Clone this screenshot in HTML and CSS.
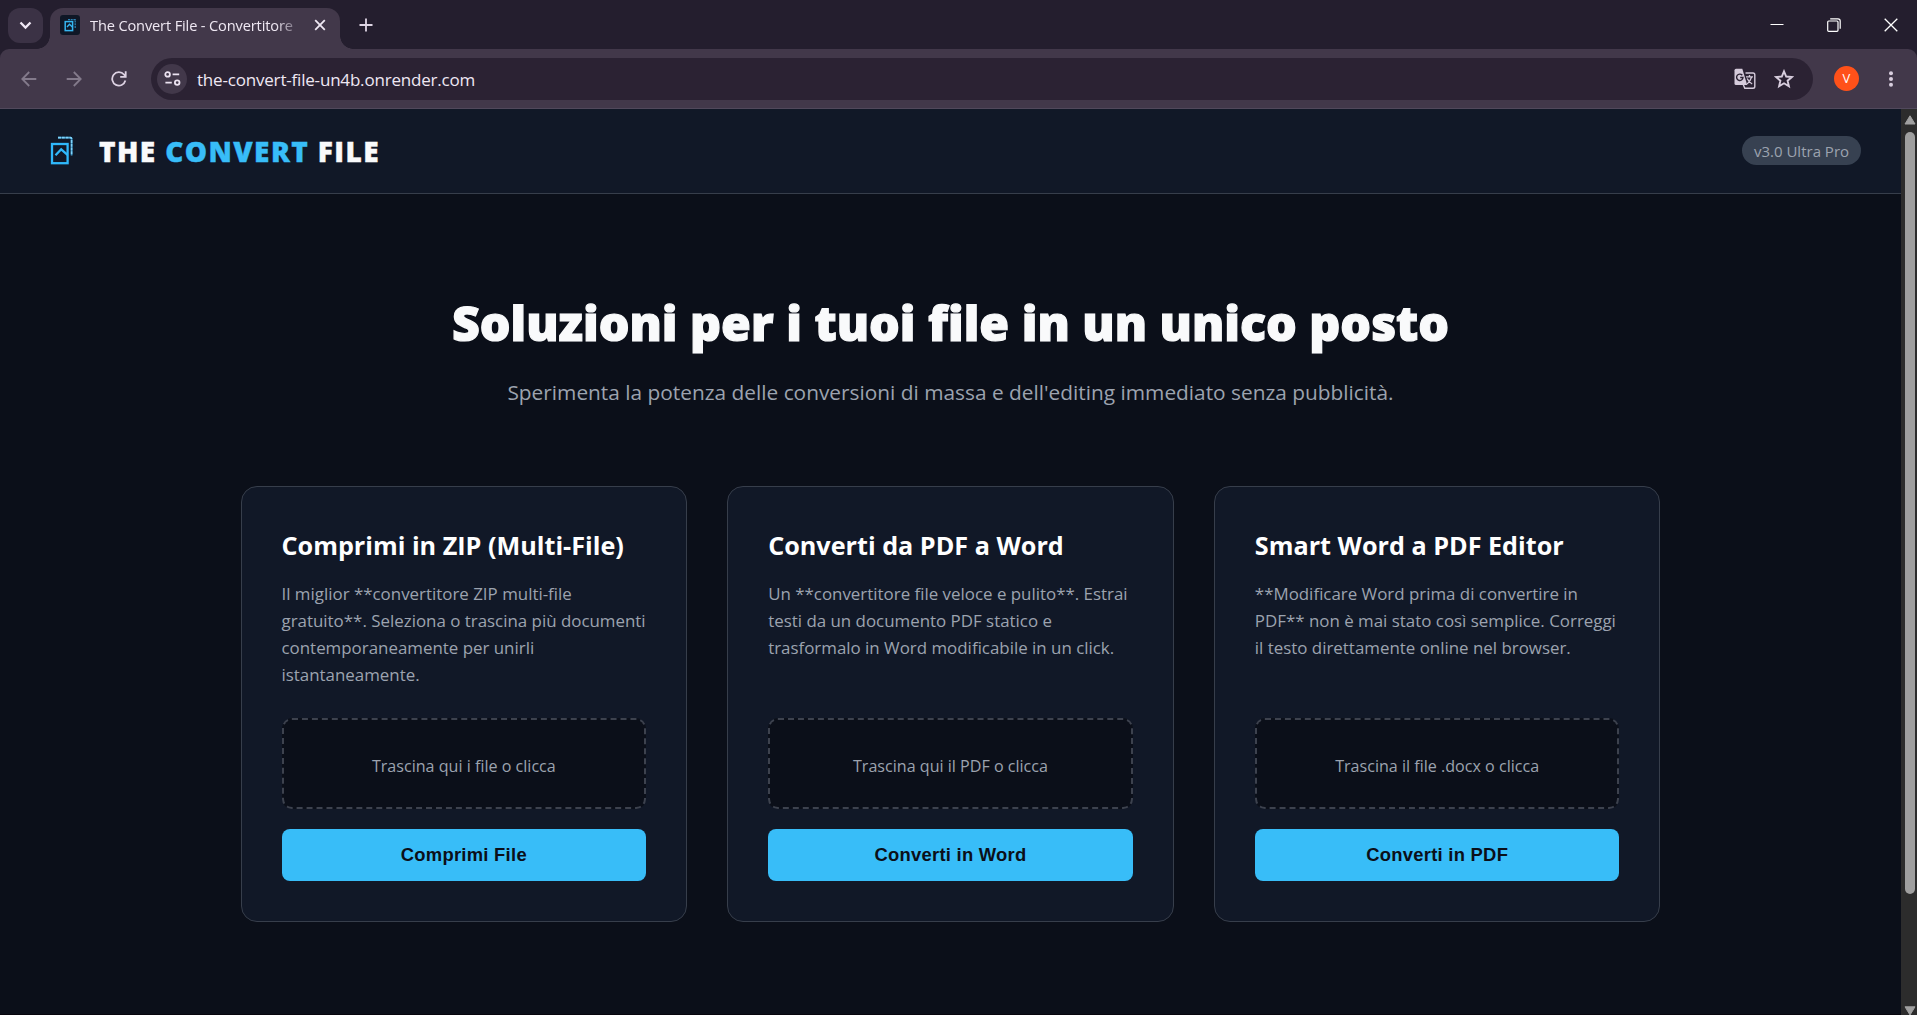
FILE: index.html
```html
<!DOCTYPE html>
<html lang="it">
<head>
  <meta charset="UTF-8">
  <title>The Convert File - Convertitore</title>
  <meta name="viewport" content="width=device-width, initial-scale=1.0">
  <link rel="stylesheet" href="styles.css">
</head>
<body>
  <!-- Barra delle schede -->
  <div class="tab-strip">
    <div class="tab-search">
      <svg width="13" height="9" viewBox="0 0 13 9"><path d="M1.5 1.5l5 5 5-5" fill="none" stroke="#f1e9f6" stroke-width="2.3"/></svg>
    </div>
    <div class="tab">
      <svg class="favicon" width="20" height="20" viewBox="0 0 20 20">
        <rect width="20" height="20" rx="3" fill="#0f1726"/>
        <path d="M8 4.7h7.2v8.6" fill="none" stroke="#2c83b5" stroke-width="1.2" stroke-dasharray="2 .7"/>
        <rect x="5.2" y="6.6" width="7.4" height="9" fill="none" stroke="#36b5f0" stroke-width="1.5"/>
        <path d="M7 12l2.5-2.7 2.8 2.7" fill="none" stroke="#36b5f0" stroke-width="1.4"/>
      </svg>
      <span class="tab-title">The Convert File - Convertitore</span>
      <svg width="12" height="12" viewBox="0 0 12 12"><path d="M1.2 1.2l9.6 9.6M10.8 1.2l-9.6 9.6" stroke="#efe8f3" stroke-width="1.8"/></svg>
    </div>
    <svg class="new-tab" width="14" height="14" viewBox="0 0 14 14"><path d="M7 .5v13M.5 7h13" stroke="#dfd6e5" stroke-width="1.8"/></svg>
    <div class="window-controls">
      <svg width="14" height="14" viewBox="0 0 14 14"><path d="M.5 6.5h13" stroke="#fff" stroke-width="1"/></svg>
      <svg width="14" height="14" viewBox="0 0 14 14" fill="none" stroke="#fff" stroke-width="1.2"><rect x=".7" y="3" width="10.3" height="10.3" rx="1"/><path d="M3.2 .8h7.8q2.2 0 2.2 2.2v7.8"/></svg>
      <svg width="14" height="14" viewBox="0 0 14 14"><path d="M.7 .7l12.6 12.6M13.3 .7L.7 13.3" stroke="#fff" stroke-width="1.3"/></svg>
    </div>
  </div>

  <!-- Barra degli indirizzi -->
  <div class="toolbar">
    <svg class="nav-icon dim" width="16" height="16" viewBox="0 0 16 16"><path d="M15.3 8H1.5M8.2 1L1.3 8l6.9 7"/></svg>
    <svg class="nav-icon dim" width="16" height="16" viewBox="0 0 16 16"><path d="M.7 8h13.8M7.8 1l6.900 7-6.900 7"/></svg>
    <svg class="nav-icon" width="16" height="16" viewBox="0 0 16 16"><path d="M14.4 9.6A6.7 6.7 0 1 1 13 3.5l1.4 1.8M14.7 .3v5.6H9.2"/></svg>
    <div class="address">
      <span class="site-info">
        <svg width="17" height="15" viewBox="0 0 17 15" fill="none" stroke="#ece3f1" stroke-width="1.8"><circle cx="3.6" cy="3.4" r="2.3"/><path d="M8.6 3.4h6.6M1.4 11.6h6.4"/><circle cx="13.2" cy="11.6" r="2.3"/></svg>
      </span>
      <span class="url">the-convert-file-un4b.onrender.com</span>
      <svg class="translate" width="22" height="22" viewBox="0 0 22 22">
        <path d="M11.5 5H19q1.8 0 1.8 1.8v11.6q0 1.8-1.8 1.8h-8.2L9 16" fill="none" stroke="#d5cbdb" stroke-width="1.4"/>
        <path d="M2 .7h6.3L13.2 17H2Q.5 17 .5 15.5V2.2Q.5 .7 2 .7z" fill="#d5cbdb"/>
        <path d="M8.3 7.3A3.2 3.2 0 1 0 9 9.500H6.200" fill="none" stroke="#2b2233" stroke-width="1.4"/>
        <path d="M12 8.800h7M15.500 7v1.800M17.600 9q-1.300 4.500-4.500 7M13.200 10.500q1.700 4 5 5.500" fill="none" stroke="#d5cbdb" stroke-width="1.3"/>
      </svg>
      <svg width="20" height="20" viewBox="0 0 20 20"><path d="M10 2.300l2.200 5.200 5.700.5-4.300 3.700 1.300 5.600-4.900-3-4.900 3 1.300-5.600L2.100 8l5.700-.5z" fill="none" stroke="#d8cede" stroke-width="1.900"/></svg>
    </div>
    <span class="avatar">V</span>
    <svg class="menu-dots" width="6" height="18" viewBox="0 0 6 18" fill="#d8cede"><circle cx="3" cy="3.300" r="2"/><circle cx="3" cy="9" r="2"/><circle cx="3" cy="14.700" r="2"/></svg>
  </div>

  <div class="viewport">
    <div class="page">
      <header>
        <svg class="logo-icon" width="24" height="30" viewBox="0 0 24 30" fill="none">
          <path d="M8 1.600h12.400q1.200 0 1.200 1.200v16.500" stroke="#2c86b8" stroke-width="1.800"/>
          <path d="M8 1.600h12.400q1.200 0 1.200 1.200v16.500" stroke="#7fd3fb" stroke-width="1.600" stroke-dasharray="3 .8"/>
          <rect x="2" y="8" width="15.600" height="19.200" stroke="#2fb8fb" stroke-width="2.300"/>
          <path d="M5.500 19.300l5.700-6 6.300 5.500" stroke="#2fb8fb" stroke-width="2.300"/>
        </svg>
        <div class="logo">THE <span>CONVERT</span> FILE</div>
        <div class="badge">v3.0 Ultra Pro</div>
      </header>

      <main>
        <h1>Soluzioni per i tuoi file in un unico posto</h1>
        <p class="subtitle">Sperimenta la potenza delle conversioni di massa e dell'editing immediato senza pubblicità.</p>

        <div class="grid">
          <div class="card">
            <h2>Comprimi in ZIP (Multi-File)</h2>
            <p>Il miglior **convertitore ZIP multi-file gratuito**. Seleziona o trascina più documenti contemporaneamente per unirli istantaneamente.</p>
            <div class="drop-zone">Trascina qui i file o clicca</div>
            <button type="button">Comprimi File</button>
          </div>
          <div class="card">
            <h2>Converti da PDF a Word</h2>
            <p>Un **convertitore file veloce e pulito**. Estrai testi da un documento PDF statico e trasformalo in Word modificabile in un click.</p>
            <div class="drop-zone">Trascina qui il PDF o clicca</div>
            <button type="button">Converti in Word</button>
          </div>
          <div class="card">
            <h2>Smart Word a PDF Editor</h2>
            <p>**Modificare Word prima di convertire in PDF** non è mai stato così semplice. Correggi il testo direttamente online nel browser.</p>
            <div class="drop-zone">Trascina il file .docx o clicca</div>
            <button type="button">Converti in PDF</button>
          </div>
        </div>
      </main>
    </div>

    <div class="scrollbar">
      <svg width="12" height="10" viewBox="0 0 12 10"><path d="M6 .8L11 9H1z" fill="#a0a0a0" stroke="#a0a0a0" stroke-linejoin="round"/></svg>
      <div class="thumb"></div>
      <svg class="arrow-down" width="12" height="9" viewBox="0 0 12 9"><path d="M6 9L1 .8h10z" fill="#a0a0a0" stroke="#a0a0a0" stroke-linejoin="round"/></svg>
    </div>
  </div>
</body>
</html>
```
FILE: styles.css
```css
* {
  box-sizing: border-box;
}
body {
  margin: 0;
  height: 100vh;
  display: flex;
  flex-direction: column;
  overflow: hidden;
  background: #0b0f19;
  color: #f9fafb;
  font-family: "Segoe UI", "Open Sans", sans-serif;
}
svg {
  display: block;
  flex-shrink: 0;
}

/* Browser */
.tab-strip {
  height: 49px;
  flex-shrink: 0;
  display: flex;
  padding-left: 8px;
  background: #241e2e;
}
.tab-search {
  width: 35px;
  height: 35px;
  margin: 8px 7px 0 0;
  border-radius: 12px;
  background: #3b3245;
  display: flex;
  align-items: center;
  justify-content: center;
}
.tab {
  position: relative;
  width: 290px;
  height: 41px;
  margin-top: 8px;
  padding: 0 14px 7px 10px;
  border-radius: 13px 13px 0 0;
  background: #42384a;
  display: flex;
  align-items: center;
}
/* angoli curvi ai piedi della scheda */
.tab::before,
.tab::after {
  content: "";
  position: absolute;
  bottom: 0;
  width: 13px;
  height: 13px;
}
.tab::before {
  left: -13px;
  background: radial-gradient(circle at 0 0, transparent 12.5px, #42384a 13px);
}
.tab::after {
  right: -13px;
  background: radial-gradient(circle at 100% 0, transparent 12.5px, #42384a 13px);
}
.tab-title {
  width: 206px;
  margin: 0 auto 0 10px;
  overflow: hidden;
  white-space: nowrap;
  font-size: 14.6px;
  letter-spacing: -0.14px;
  color: #efe8f3;
  -webkit-mask-image: linear-gradient(to right, #000 90%, transparent 104%);
  mask-image: linear-gradient(to right, #000 90%, transparent 104%);
}
.new-tab {
  margin: 18px 0 0 19px;
}
.window-controls {
  margin: 18px 19px 0 auto;
  display: flex;
  gap: 43px;
}
.toolbar {
  height: 60px;
  flex-shrink: 0;
  display: flex;
  align-items: center;
  padding: 0 23px 0 21px;
  background: #42384a;
  border-bottom: 1px solid #51495c;
  border-radius: 9px 9px 0 0;
  box-shadow: 0 -9px 0 9px #241e2e;
  clip-path: inset(0);
}
.nav-icon {
  margin-right: 29px;
  fill: none;
  stroke: #ddd2e3;
  stroke-width: 1.8;
}
.nav-icon.dim {
  stroke: #837a8b;
}
.nav-icon:nth-child(3) {
  margin-right: 24px;
}
.address {
  flex: 1;
  height: 42px;
  border-radius: 21px;
  background: #2b2233;
  display: flex;
  align-items: center;
  padding: 0 19px 0 6px;
}
.site-info {
  width: 30px;
  height: 30px;
  border-radius: 50%;
  background: #42384a;
  display: flex;
  align-items: center;
  justify-content: center;
}
.url {
  margin: 0 auto 0 10px;
  padding-top: 1px;
  font-size: 17px;
  letter-spacing: -0.19px;
  color: #efe8f3;
}
.translate {
  margin-right: 18px;
}
.avatar {
  width: 25px;
  height: 25px;
  margin: 0 29px 0 21px;
  border-radius: 50%;
  background: #ff5119;
  color: #fff;
  font-size: 13px;
  line-height: 25px;
  text-align: center;
}

/* Pagina */
.viewport {
  flex: 1;
  min-height: 0;
  display: flex;
}
.page {
  flex: 1;
  border-bottom: 1px solid #07050d;
}
header {
  height: 85px;
  display: flex;
  align-items: center;
  padding: 0 40px 0 50px;
  background: #111827;
  border-bottom: 1px solid #373e4b;
}
.logo-icon {
  margin-right: 25px;
}
.logo {
  font-size: 28px;
  font-weight: 900;
  letter-spacing: 1.4px;
  -webkit-text-stroke: 0.4px;
}
.logo span {
  color: #38bdf8;
}
.badge {
  width: 119px;
  height: 29px;
  margin: 0 0 2px auto;
  border-radius: 15px;
  background: #374151;
  color: #9ca3af;
  font-size: 15px;
  line-height: 30px;
  text-align: center;
}
main {
  max-width: 1500px;
  margin: 0 auto;
  padding: 98px 40px 0;
}
h1 {
  margin: 0 0 23px;
  font-size: 48.3px;
  font-weight: 900;
  line-height: 60px;
  text-align: center;
  -webkit-text-stroke: 1.2px;
}
.subtitle {
  margin: 0 0 77px;
  font-size: 20.85px;
  line-height: 34px;
  text-align: center;
  color: #9ca3af;
}
.grid {
  display: grid;
  grid-template-columns: repeat(3, 1fr);
  gap: 40px;
}
.card {
  display: flex;
  flex-direction: column;
  padding: 40px;
  background: #111827;
  border: 1px solid #373e4b;
  border-radius: 16px;
}
.card h2 {
  margin: 0 0 17px;
  font-size: 25.2px;
  line-height: 36px;
  color: #fff;
}
.card p {
  flex-grow: 1;
  margin: 0 0 30px;
  font-size: 16.9px;
  line-height: 27px;
  color: #9ca3af;
}
.drop-zone {
  height: 91px;
  padding-top: 5px;
  border: 2px dashed #3d424e;
  border-radius: 10px;
  background: #0b0f19;
  color: #9ca3af;
  font-size: 16.1px;
  display: flex;
  align-items: center;
  justify-content: center;
}
.card button {
  height: 52px;
  margin-top: 20px;
  padding: 0 0 1px;
  border: none;
  border-radius: 8px;
  background: #38bdf8;
  color: #0b0f19;
  font-family: Arial, "Liberation Sans", sans-serif;
  font-size: 18.4px;
  font-weight: bold;
  letter-spacing: 0.27px;
  cursor: pointer;
}

.scrollbar {
  width: 16px;
  padding: 6px 0 0 1px;
  display: flex;
  flex-direction: column;
  align-items: center;
  background: #2c2c2c;
}
.thumb {
  width: 10px;
  height: 762px;
  margin-top: 7px;
  border-radius: 5px;
  background: #9f9f9f;
}
.arrow-down {
  margin-top: auto;
}
```
